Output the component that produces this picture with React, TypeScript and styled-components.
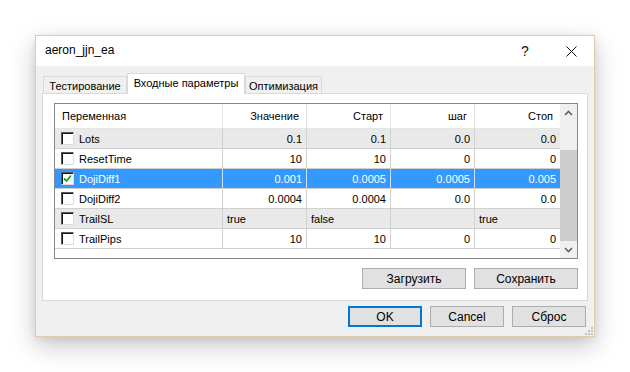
import React from "react";
import styled, { createGlobalStyle, css } from "styled-components";

const GlobalStyle = createGlobalStyle`
  html, body { margin: 0; padding: 0; background: #ffffff; }
  body { font-family: "Liberation Sans", Arial, sans-serif; font-size: 11px; color: #000; }
  * { box-sizing: border-box; }
`;

const Page = styled.div`
  width: 630px;
  height: 372px;
  padding: 35px 0 0 35px;
  background: #ffffff;
`;

const Window = styled.div`
  position: relative;
  width: 560px;
  height: 302px;
  border: 1px solid #e6c9a7;
  background: #f0f0f0;
  box-shadow: 0 9px 24px rgba(0, 0, 0, 0.22), 0 2px 8px rgba(0, 0, 0, 0.08);
  display: flex;
  flex-direction: column;
`;

const TitleBar = styled.div`
  height: 30px;
  background: #ffffff;
  display: flex;
  align-items: center;
`;

const Title = styled.div`
  flex: 1;
  padding-left: 9px;
  font-size: 12px;
  color: #000;
  padding-bottom: 2px;
`;

const TitleButton = styled.div`
  width: 46px;
  height: 30px;
  display: flex;
  align-items: center;
  justify-content: center;
  font-size: 14px;
  color: #111;
`;

const Body = styled.div`
  padding: 0 6px;
  display: flex;
  flex-direction: column;
`;

const TabStrip = styled.div`
  height: 27px;
  display: flex;
  align-items: flex-end;
  padding-left: 1px;
`;

const Tab = styled.div<{ $active?: boolean; $w: number }>`
  width: ${(p) => p.$w}px;
  border: 1px solid #d9d9d9;
  border-bottom: none;
  display: flex;
  align-items: center;
  justify-content: center;
  white-space: nowrap;
  ${(p) =>
    p.$active
      ? css`
          height: 21px;
          background: #ffffff;
          margin-bottom: -1px;
          position: relative;
          z-index: 1;
          padding-bottom: 2px;
        `
      : css`
          height: 17px;
          background: #f0f0f0;
          padding-top: 1px;
        `}
`;

const Panel = styled.div`
  height: 208px;
  border: 1px solid #d9d9d9;
  background: #ffffff;
  padding: 9px 9px 11px 11px;
  display: flex;
  flex-direction: column;
`;

const Table = styled.div`
  width: 524px;
  height: 156px;
  border: 1px solid #828790;
  display: flex;
  background: #ffffff;
`;

const Grid = styled.div`
  width: 505px;
  display: flex;
  flex-direction: column;
`;

const COLS = "168px 84px 84px 84px 85px";

const HeaderRow = styled.div`
  display: grid;
  grid-template-columns: ${COLS};
  height: 25px;
  border-bottom: 1px solid #e5e5e5;
`;

const HeaderCell = styled.div<{ $left?: boolean; $last?: boolean }>`
  display: flex;
  align-items: center;
  justify-content: ${(p) => (p.$left ? "flex-start" : "flex-end")};
  padding: ${(p) => (p.$left ? "0 0 0 7px" : "0 7px 0 0")};
  border-right: ${(p) => (p.$last ? "none" : "1px solid #e5e5e5")};
  white-space: nowrap;
`;

type Variant = "plain" | "grey" | "selected";

const Row = styled.div<{ $v: Variant }>`
  display: grid;
  grid-template-columns: ${COLS};
  height: 20px;
  border-bottom: 1px solid #d0d0d0;
  background: ${(p) => (p.$v === "grey" ? "#e9e9e9" : p.$v === "selected" ? "#3399ff" : "#ffffff")};
  color: ${(p) => (p.$v === "selected" ? "#ffffff" : "#000000")};
`;

const Cell = styled.div<{ $left?: boolean; $last?: boolean; $v: Variant }>`
  display: flex;
  align-items: center;
  justify-content: ${(p) => (p.$left ? "flex-start" : "flex-end")};
  padding: ${(p) => (p.$left ? "0 0 0 4px" : "0 4px 0 0")};
  border-right: ${(p) => (p.$last ? "none" : `1px solid ${p.$v === "selected" ? "#cfe3f7" : "#d0d0d0"}`)};
  white-space: nowrap;
`;

const NameCell = styled.div<{ $v: Variant }>`
  display: flex;
  align-items: center;
  gap: 4px;
  padding-left: 6px;
  border-right: 1px solid ${(p) => (p.$v === "selected" ? "#cfe3f7" : "#d0d0d0")};
`;

const Check = styled.div`
  width: 13px;
  height: 13px;
  border: 1px solid;
  border-color: #5a5a5a #dcdcdc #dcdcdc #5a5a5a;
  box-shadow: inset 1px 1px 0 #141414;
  background: #ffffff;
  display: flex;
  align-items: center;
  justify-content: center;
  margin-right: 1px;
`;

const ScrollBar = styled.div`
  width: 17px;
  display: flex;
  flex-direction: column;
  background: #f0f0f0;
`;

const ScrollButton = styled.div`
  height: 17px;
  display: flex;
  align-items: center;
  justify-content: center;
`;

const ScrollTrack = styled.div`
  flex: 1;
  padding-top: 29px;
  display: flex;
  flex-direction: column;
`;

const Thumb = styled.div`
  flex: 1;
  background: #cdcdcd;
`;

const ButtonRow = styled.div<{ $top: number; $right: number }>`
  display: flex;
  justify-content: flex-end;
  gap: 8px;
  margin-top: ${(p) => p.$top}px;
  margin-right: ${(p) => p.$right}px;
`;

const Button = styled.div<{ $w: number; $default?: boolean }>`
  width: ${(p) => p.$w}px;
  height: 21px;
  background: #e1e1e1;
  border: ${(p) => (p.$default ? "2px solid #0078d7" : "1px solid #adadad")};
  display: flex;
  align-items: center;
  justify-content: center;
  font-size: 12px;
  color: #000;
`;

const Grip = styled.svg`
  position: absolute;
  right: 1px;
  bottom: 1px;
`;

type Data = {
  name: string;
  checked?: boolean;
  vals: string[];
  v: Variant;
  left?: boolean;
};

const rows: Data[] = [
  { name: "Lots", vals: ["0.1", "0.1", "0.0", "0.0"], v: "grey" },
  { name: "ResetTime", vals: ["10", "10", "0", "0"], v: "plain" },
  { name: "DojiDiff1", checked: true, vals: ["0.001", "0.0005", "0.0005", "0.005"], v: "selected" },
  { name: "DojiDiff2", vals: ["0.0004", "0.0004", "0.0", "0.0"], v: "plain" },
  { name: "TrailSL", vals: ["true", "false", "", "true"], v: "grey", left: true },
  { name: "TrailPips", vals: ["10", "10", "0", "0"], v: "plain" },
];

const Chevron = ({ up }: { up?: boolean }) => (
  <svg width="9" height="6" viewBox="0 0 9 6">
    <polyline
      points={up ? "1,5 4.5,1.5 8,5" : "1,1 4.5,4.5 8,1"}
      fill="none"
      stroke="#606060"
      strokeWidth="1.6"
    />
  </svg>
);

export default function App() {
  return (
    <>
      <GlobalStyle />
      <Page>
        <Window>
          <TitleBar>
            <Title>aeron_jjn_ea</Title>
            <TitleButton>?</TitleButton>
            <TitleButton>
              <svg width="11" height="11" viewBox="0 0 11 11">
                <path d="M0.5 0.5 L10.5 10.5 M10.5 0.5 L0.5 10.5" stroke="#111" strokeWidth="1" />
              </svg>
            </TitleButton>
          </TitleBar>
          <Body>
            <TabStrip>
              <Tab $w={84}>Тестирование</Tab>
              <Tab $w={118} $active>
                Входные параметры
              </Tab>
              <Tab $w={77}>Оптимизация</Tab>
            </TabStrip>
            <Panel>
              <Table>
                <Grid>
                  <HeaderRow>
                    <HeaderCell $left>Переменная</HeaderCell>
                    <HeaderCell>Значение</HeaderCell>
                    <HeaderCell>Старт</HeaderCell>
                    <HeaderCell>шаг</HeaderCell>
                    <HeaderCell $last>Стоп</HeaderCell>
                  </HeaderRow>
                  {rows.map((r) => (
                    <Row key={r.name} $v={r.v}>
                      <NameCell $v={r.v}>
                        <Check>
                          {r.checked && (
                            <svg width="9" height="9" viewBox="0 0 9 9">
                              <path d="M1 4.5 L3.5 7 L8 1.5" fill="none" stroke="#1f9d1f" strokeWidth="1.8" />
                            </svg>
                          )}
                        </Check>
                        {r.name}
                      </NameCell>
                      {r.vals.map((val, i) => (
                        <Cell key={i} $v={r.v} $left={r.left} $last={i === 3}>
                          {val}
                        </Cell>
                      ))}
                    </Row>
                  ))}
                </Grid>
                <ScrollBar>
                  <ScrollButton>
                    <Chevron up />
                  </ScrollButton>
                  <ScrollTrack>
                    <Thumb />
                  </ScrollTrack>
                  <ScrollButton>
                    <Chevron />
                  </ScrollButton>
                </ScrollBar>
              </Table>
              <ButtonRow $top={9} $right={0}>
                <Button $w={104}>Загрузить</Button>
                <Button $w={104}>Сохранить</Button>
              </ButtonRow>
            </Panel>
            <ButtonRow $top={5} $right={2}>
              <Button $w={74} $default>
                OK
              </Button>
              <Button $w={74}>Cancel</Button>
              <Button $w={74}>Сброс</Button>
            </ButtonRow>
          </Body>
          <Grip width="8" height="8" viewBox="0 0 8 8">
            <rect x="6" y="0" width="2" height="2" fill="#c4c4c4" />
            <rect x="3" y="3" width="2" height="2" fill="#c4c4c4" />
            <rect x="6" y="3" width="2" height="2" fill="#c4c4c4" />
            <rect x="0" y="6" width="2" height="2" fill="#c4c4c4" />
            <rect x="3" y="6" width="2" height="2" fill="#c4c4c4" />
            <rect x="6" y="6" width="2" height="2" fill="#c4c4c4" />
          </Grip>
        </Window>
      </Page>
    </>
  );
}
